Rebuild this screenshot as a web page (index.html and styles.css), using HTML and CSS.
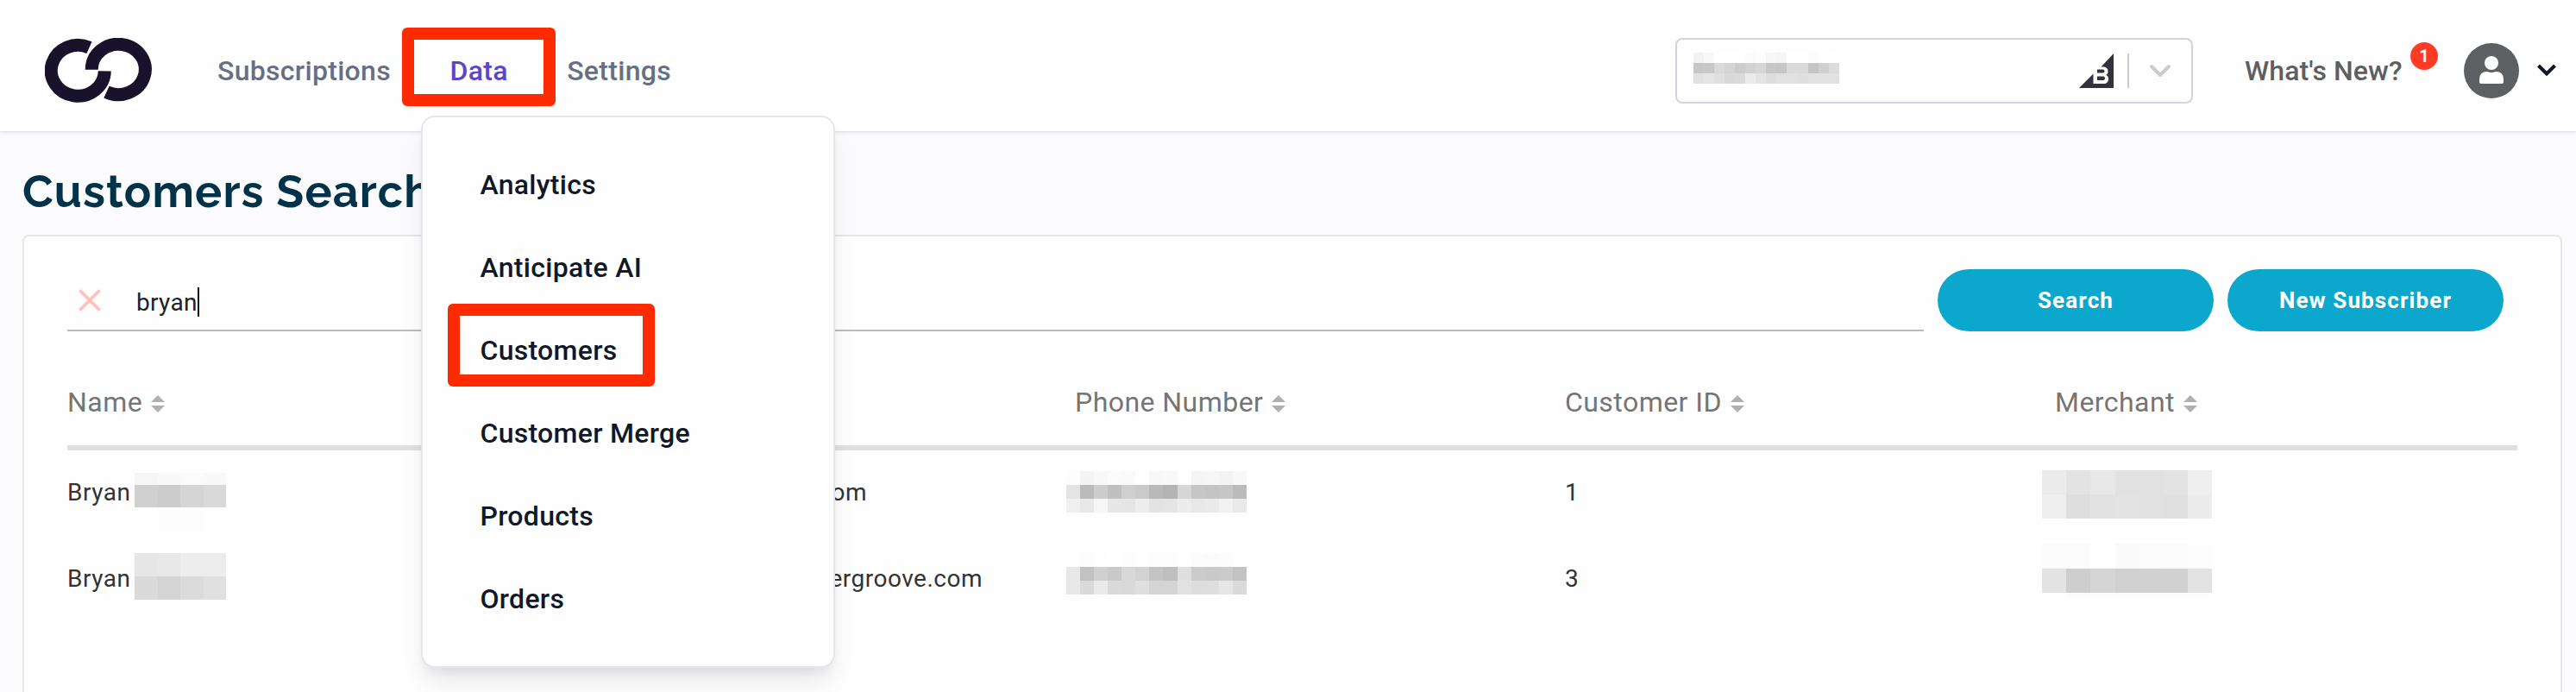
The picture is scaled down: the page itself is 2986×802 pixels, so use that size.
FILE: index.html
```html
<!DOCTYPE html>
<html lang="en">
<head>
    <meta charset="UTF-8">
    <meta name="viewport" content="width=device-width, initial-scale=1.0">
    <title>Customers Search</title>
    <link rel="stylesheet" href="styles.css">
</head>
<body>
    <header class="header">
        <svg class="logo" width="124" height="76" viewBox="0 0 124 76">
            <g fill="none" stroke="#18122b" stroke-width="15">
                <path d="M51.5 11.2A31 29.4 0 1 0 69.3 38.3"/>
                <path d="M54.3 36.7A31 29.2 0 1 1 71.5 62.6"/>
            </g>
        </svg>
        <nav class="nav">
            <a class="nav-link">Subscriptions</a>
            <div class="nav-link active">
                Data
                <div class="menu">
                    <a class="menu-item">Analytics</a>
                    <a class="menu-item">Anticipate AI</a>
                    <a class="menu-item">Customers<span class="highlight highlight-customers"></span></a>
                    <a class="menu-item">Customer Merge</a>
                    <a class="menu-item">Products</a>
                    <a class="menu-item">Orders</a>
                </div>
                <span class="highlight highlight-data"></span>
            </div>
            <a class="nav-link">Settings</a>
        </nav>
        <div class="store-select">
            <div class="mosaic store-name" data-cols="14" data-w="12.05" data-heights="12 12 12"
                data-shades="f2f9fffffffbfdf7f5fffffcfeff c6c8dad4ccd2d6c7c5dadac5d0dc e1e4dfd8daebe4dde1e1dfe2e2e1"></div>
            <svg class="store-logo" width="40" height="40" viewBox="0 0 40 40">
                <path d="M40 0V40H0L16.5 23.5V35H28C32 35 34 33 34 29.5C34 27 33 25.500 31 25C33 24 33.500 22.500 33.500 20.500C33.500 17 31 15.500 28 15.500H25.500Z" fill="#34313f"/>
                <path d="M21 18.500H26.500C28.500 18.500 29.500 19 29.500 20.500C29.500 22 28.500 22.500 26.500 22.500H21ZM21 26.500H27C29 26.500 30 27 30 28.700C30 30.300 29 31 27 31H21Z" fill="#34313f"/>
            </svg>
            <span class="divider"></span>
            <svg width="24" height="16" viewBox="0 0 24 16">
                <path d="M2 3L12 13L22 3" fill="none" stroke="#ccc" stroke-width="4" stroke-linecap="round" stroke-linejoin="round"/>
            </svg>
        </div>
        <div class="whats-new">What's New?<span class="badge">1</span></div>
        <div class="avatar">
            <svg width="28" height="32" viewBox="0 0 28 32">
                <circle cx="14" cy="8" r="8" fill="#fff"/>
                <path d="M0 30V27Q0 18 9 18Q14 20 19 18Q28 18 28 27V30Q28 32 26 32H2Q0 32 0 30Z" fill="#fff"/>
            </svg>
        </div>
        <svg class="account-arrow" width="22" height="16" viewBox="0 0 22 16">
            <path d="M1.500 2L11 11.500L20.500 2" fill="none" stroke="#111827" stroke-width="4"/>
        </svg>
    </header>

    <main class="main">
        <h1 class="title">Customers Search</h1>
        <div class="card">
            <div class="search-row">
                <div class="search-field">
                    <svg class="clear" width="26" height="26" viewBox="0 0 26 26">
                        <path d="M1.500 1.500L24.500 24.500M24.500 1.500L1.500 24.500" stroke="#ffbfba" stroke-width="3.600"/>
                    </svg>
                    <span class="query">bryan</span><span class="caret"></span>
                </div>
                <button class="btn">Search</button>
                <button class="btn">New Subscriber</button>
            </div>

            <div class="table">
                <div class="row head">
                    <div class="cell">Name<svg class="sort" width="16" height="20"><path d="M0 8L8 0L16 8ZM0 12H16L8 20Z"/></svg></div>
                    <div class="cell"></div>
                    <div class="cell">Phone Number<svg class="sort" width="16" height="20"><path d="M0 8L8 0L16 8ZM0 12H16L8 20Z"/></svg></div>
                    <div class="cell">Customer ID<svg class="sort" width="16" height="20"><path d="M0 8L8 0L16 8ZM0 12H16L8 20Z"/></svg></div>
                    <div class="cell">Merchant<svg class="sort" width="16" height="20"><path d="M0 8L8 0L16 8ZM0 12H16L8 20Z"/></svg></div>
                </div>
                <div class="row first">
                    <div class="cell">
                        <span class="name">Bryan</span>
                        <div class="mosaic last-name" data-cols="4" data-w="26.5" data-heights="13.5 26.5 27"
                            data-shades="f6f9fbf9 d0cdd5d9 fefdfdfe"></div>
                    </div>
                    <div class="cell"><span class="email">om</span></div>
                    <div class="cell">
                        <div class="mosaic phone" data-cols="13" data-w="16.07" data-heights="16 16 16"
                            data-shades="fdf4f8fbfafef8f9fef5f6f3f8 e4bbcdc0cfcab9b4d6c6c4c6bb f0e8f6e7e5ede3e5ece8eaf1e9"></div>
                    </div>
                    <div class="cell">1</div>
                    <div class="cell">
                        <div class="mosaic merchant" data-cols="7" data-w="28.2" data-heights="28 28"
                            data-shades="ebe3e8e1e1e3ef efdee2e3e1e0ec"></div>
                    </div>
                </div>
                <div class="row second">
                    <div class="cell">
                        <span class="name">Bryan</span>
                        <div class="mosaic last-name" data-cols="4" data-w="26.5" data-heights="26.5 27"
                            data-shades="e6e8eded dad4dbe0"></div>
                    </div>
                    <div class="cell"><span class="email">ergroove.com</span></div>
                    <div class="cell">
                        <div class="mosaic phone" data-cols="13" data-w="16.07" data-heights="16 16 16"
                            data-shades="fefdfefffdfefdfdfefcfbfcfe e8c2d0c9d8d3c4bfdfcbc9cbc3 e8daeadad9dfd4d4e1dddee6da"></div>
                    </div>
                    <div class="cell">3</div>
                    <div class="cell">
                        <div class="mosaic merchant" data-cols="7" data-w="28.2" data-heights="29 28 5"
                            data-shades="fcfcfefafbfcfd e3ced5d1d1d1e3 fefcfdfdfdfdfd"></div>
                    </div>
                </div>
            </div>
        </div>
    </main>

    <script>
        // Draw the masked values as blocks of grey, one hex pair per block
        document.querySelectorAll('.mosaic').forEach((el) => {
            const cols = Number(el.dataset.cols);
            const w = Number(el.dataset.w);
            const heights = el.dataset.heights.split(' ').map(Number);
            const total = heights.reduce((a, b) => a + b, 0);
            let y = 0;
            let rects = '';
            el.dataset.shades.split(' ').forEach((line, r) => {
                for (let c = 0; c < cols; c++) {
                    const s = line.substr(c * 2, 2);
                    rects += `<rect x="${c * w}" y="${y}" width="${w}" height="${heights[r]}" fill="#${s}${s}${s}"/>`;
                }
                y += heights[r];
            });
            el.innerHTML = `<svg width="${cols * w}" height="${total}" shape-rendering="crispEdges">${rects}</svg>`;
        });
    </script>
</body>
</html>
```
FILE: styles.css
```css
* {
    box-sizing: border-box;
}
body {
    font-family: Roboto, sans-serif;
    background-color: #fbfbfe;
    margin: 0;
    height: 802px;
    overflow: hidden;
}
svg {
    display: block;
    flex: none;
}
.header {
    position: relative;
    z-index: 1;
    display: flex;
    align-items: center;
    height: 152px;
    padding: 12px 23px 0 52px;
    background-color: #fefefe;
    box-shadow: 0 1px 2px rgba(30, 30, 70, 0.1), 0 2px 6px rgba(30, 30, 70, 0.06);
}
.nav {
    display: flex;
    gap: 68.5px;
    margin-left: 76px;
}
.nav-link {
    position: relative;
    font-size: 32px;
    font-weight: 500;
    line-height: 40px;
    letter-spacing: 0.3px;
    color: #667085;
}
.nav-link.active {
    color: #5b45c9;
}
.menu {
    position: absolute;
    top: 72px;
    left: -33px;
    width: 480px;
    height: 640px;
    padding-top: 30px;
    background-color: #fefefe;
    border: 2px solid #e5e6eb;
    border-radius: 16px;
    box-shadow: 0 20px 30px -6px rgba(0, 0, 0, 0.1), 0 8px 12px -4px rgba(20, 20, 60, 0.06);
}
.menu-item {
    position: relative;
    display: block;
    padding-left: 66px;
    line-height: 96px;
    color: #111827;
}
/* red marker frames */
.highlight {
    position: absolute;
    border: 14px solid #ff2a00;
    border-radius: 6px;
}
.highlight-data {
    top: -30px;
    left: -55px;
    width: 178px;
    height: 91px;
}
.highlight-customers {
    top: -6px;
    left: 29px;
    width: 240px;
    height: 96px;
}
.store-select {
    display: flex;
    align-items: center;
    width: 600px;
    height: 76px;
    margin-left: auto;
    padding: 0 24px 0 19px;
    border: 2px solid #cfd4e0;
    border-radius: 8px;
}
.store-name {
    margin-bottom: 6px;
}
.store-logo {
    margin-left: auto;
}
.divider {
    width: 2px;
    height: 40px;
    margin: 0 24px 0 16px;
    background-color: #ccc;
}
.whats-new {
    position: relative;
    width: 254px;
    margin-left: 60px;
    font-size: 32px;
    font-weight: 500;
    line-height: 40px;
    letter-spacing: 0.1px;
    color: #5c6062;
}
.badge {
    position: absolute;
    top: -13px;
    left: 192px;
    width: 32px;
    height: 32px;
    border-radius: 50%;
    background-color: #ff3b25;
    color: #fff;
    font-size: 20px;
    font-weight: 700;
    line-height: 32px;
    text-align: center;
}
.avatar {
    display: flex;
    align-items: center;
    justify-content: center;
    width: 64px;
    height: 64px;
    padding-bottom: 2px;
    border-radius: 50%;
    background-color: #5c6062;
}
.account-arrow {
    margin-left: 21px;
}
.main {
    padding: 38px 16px 0 26px;
}
.title {
    margin: 0 0 18px;
    font-family: Raleway, "Open Sans", sans-serif;
    font-size: 52px;
    font-weight: 700;
    line-height: 64px;
    letter-spacing: 1.2px;
    color: #003349;
}
.card {
    height: 560px;
    padding: 38px 50px;
    background-color: #fefefe;
    border: 2px solid #e4e8eb;
    border-radius: 8px;
}
.search-row {
    display: flex;
    gap: 16px;
    height: 72px;
    padding-right: 16px;
}
.search-field {
    display: flex;
    align-items: center;
    flex: 1;
    padding: 6px 0 0 13px;
    border-bottom: 2px solid #bbb;
}
.clear {
    margin: 0 41px 4px 0;
}
.query {
    font-size: 28px;
    letter-spacing: 0.3px;
    color: #222;
}
.caret {
    width: 2px;
    height: 34px;
    background-color: #111;
}
.btn {
    width: 320px;
    border: none;
    border-radius: 36px;
    background-color: #0ba7cc;
    color: #fff;
    font-family: inherit;
    font-size: 26px;
    font-weight: 700;
    letter-spacing: 1.1px;
}
.table {
    margin-top: 32px;
}
.row {
    display: grid;
    grid-template-columns: repeat(5, 568px);
    height: 100px;
    font-size: 28px;
    line-height: 32px;
    letter-spacing: 0.5px;
    color: #333;
}
.row.head {
    height: 106px;
    border-bottom: 6px solid #e0e0e0;
    font-size: 32px;
    letter-spacing: 0.45px;
    color: #757575;
}
.cell {
    display: flex;
    align-items: center;
    padding: 0 0 2px 32px;
}
.head .cell {
    padding-bottom: 0;
}
.cell:first-child {
    padding-left: 0;
}
.sort {
    margin: 4px 0 0 10px;
    fill: #b0b0b0;
}
.name {
    width: 78px;
}
.email {
    text-align: right;
}
.first .email {
    width: 327px;
}
.second .email {
    width: 461px;
}
.row .mosaic {
    align-self: flex-start;
}
.phone {
    margin-left: -10px;
}
.merchant {
    margin-left: -15px;
}
.first .last-name {
    margin-top: 26px;
}
.first .phone {
    margin-top: 24px;
}
.first .merchant {
    margin-top: 23px;
}
.second .last-name {
    margin-top: 19px;
}
.second .phone {
    margin-top: 19px;
}
.second .merchant {
    margin-top: 8px;
}
```
